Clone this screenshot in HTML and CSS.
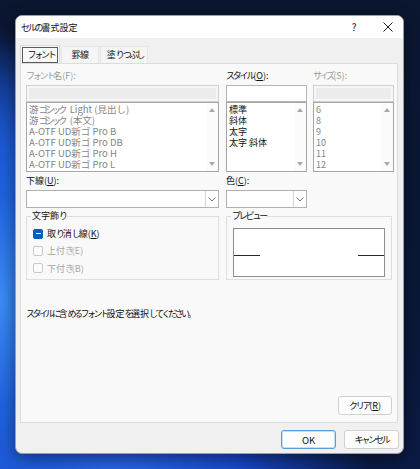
FILE: index.html
```html
<!DOCTYPE html>
<html lang="ja">
<head>
<meta charset="utf-8">
<title>セルの書式設定</title>
<link rel="stylesheet" href="styles.css">
</head>
<body>
<div class="desktop">
  <div class="dialog">
    <div class="titlebar">
      <span class="title"><span class="kn">セルの</span>書式設定</span>
      <span class="help">?</span>
      <span class="close">
        <svg width="10" height="10" viewBox="0 0 10 10"><path d="M0.5 0.5 L9.5 9.5 M9.5 0.5 L0.5 9.5" stroke="#1a1a1a" stroke-width="1" fill="none"/></svg>
      </span>
    </div>

    <div class="tabs">
      <div class="tab active"><span class="focus"><span class="kn">フォント</span></span></div>
      <div class="tab t2">罫線</div>
      <div class="tab t3">塗<span class="kn">りつぶし</span></div>
    </div>

    <div class="panel">
      <div class="top-grid">
        <div class="col">
          <div class="label dis"><span class="kn">フォント</span>名(F):</div>
          <div class="input dis"></div>
          <div class="list">
            <div class="items dis fontlist">
              <div>游<span class="kn">ゴシッ</span>ク Light (見出し)</div>
              <div>游<span class="kn">ゴシッ</span>ク (本文)</div>
              <div>A-OTF UD新ゴ Pro B</div>
              <div>A-OTF UD新ゴ Pro DB</div>
              <div>A-OTF UD新ゴ Pro H</div>
              <div>A-OTF UD新ゴ Pro L</div>
            </div>
            <div class="scroll"><span class="up"></span><span class="down"></span></div>
          </div>
          <div class="label">下線(<u>U</u>):</div>
          <div class="combo"><span class="field"></span><span class="drop"><svg width="8" height="5" viewBox="0 0 8 5"><path d="M0.5 0.5 L4 4 L7.5 0.5" stroke="#707070" fill="none"/></svg></span></div>
        </div>

        <div class="col">
          <div class="label"><span class="kn">スタイル</span>(<u>O</u>):</div>
          <div class="input"></div>
          <div class="list">
            <div class="items">
              <div>標準</div>
              <div>斜体</div>
              <div>太字</div>
              <div>太字 斜体</div>
            </div>
            <div class="scroll"><span class="up"></span><span class="down"></span></div>
          </div>
          <div class="label">色(<u>C</u>):</div>
          <div class="combo"><span class="field"></span><span class="drop"><svg width="8" height="5" viewBox="0 0 8 5"><path d="M0.5 0.5 L4 4 L7.5 0.5" stroke="#707070" fill="none"/></svg></span></div>
        </div>

        <div class="col">
          <div class="label dis"><span class="kn">サイズ</span>(S):</div>
          <div class="input dis"></div>
          <div class="list">
            <div class="items dis">
              <div>6</div>
              <div>8</div>
              <div>9</div>
              <div>10</div>
              <div>11</div>
              <div>12</div>
            </div>
            <div class="scroll"><span class="up"></span><span class="down"></span></div>
          </div>
        </div>
      </div>

      <div class="groups">
        <fieldset class="group effects">
          <legend>文字飾<span class="kn">り</span></legend>
          <div class="check"><span class="box on"></span><span>取<span class="kn">り</span>消<span class="kn">し</span>線(<u>K</u>)</span></div>
          <div class="check dis"><span class="box"></span><span>上付<span class="kn">き</span>(E)</span></div>
          <div class="check dis"><span class="box"></span><span>下付<span class="kn">き</span>(B)</span></div>
        </fieldset>
        <fieldset class="group preview">
          <legend><span class="kn">プレビュー</span></legend>
          <div class="pbox"><span class="pline"></span><span class="pline"></span></div>
        </fieldset>
      </div>

      <p class="hint"><span class="kn">スタイルに</span>含<span class="kn">めるフォント</span>設定<span class="kn">を</span>選択<span class="kn">してください</span>。</p>

      <div class="clear-row"><button class="btn clear"><span class="kn">クリア</span>(<u>R</u>)</button></div>
    </div>

    <div class="footer">
      <button class="btn ok">OK</button>
      <button class="btn"><span class="kn">キャンセル</span></button>
    </div>
  </div>
</div>
</body>
</html>
```

FILE: styles.css
```css
* { box-sizing: border-box; }

html, body {
  margin: 0;
  padding: 0;
}

body {
  width: 420px;
  height: 469px;
  overflow: hidden;
  font-family: "Noto Sans CJK JP", "Noto Sans", sans-serif;
  font-size: 9px;
  color: #0f0f0f;
}

/* narrow kana runs (the reference font has proportional kana) */
.kn { letter-spacing: -2.2px; }

.desktop {
  width: 420px;
  height: 469px;
  padding: 15px 0 0 15px;
  background:
    radial-gradient(ellipse 120px 260px at 0px 300px, #3d8cf5 0%, #1f63e0 40%, rgba(20,70,200,0.0) 100%),
    radial-gradient(ellipse 260px 120px at 110px 480px, #2a6ae6 0%, #1848c8 50%, rgba(20,60,180,0) 100%),
    radial-gradient(ellipse 200px 300px at -40px 320px, #1a55d8 0%, #1445c0 60%, rgba(15,40,140,0) 100%),
    linear-gradient(180deg, #0b1631 0%, #0a1836 60%, #0a1a44 100%);
}

.dialog {
  width: 389px;
  height: 439px;
  background: #f0f0f0;
  border: 1px solid #9aa0aa;
  border-radius: 7px;
  overflow: hidden;
  display: flex;
  flex-direction: column;
  box-shadow: 0 4px 16px rgba(0,0,0,0.45);
}

/* title bar */
.titlebar {
  height: 22px;
  flex: none;
  background: #ffffff;
  display: flex;
  align-items: center;
  padding-left: 5px;
}
.title {
  flex: 1;
  line-height: 14px;
  padding-top: 1px;
  white-space: nowrap;
}
.help {
  width: 12px;
  font-size: 10px;
  text-align: center;
  margin-right: 23px;
  line-height: 14px;
}
.close {
  width: 10px;
  height: 10px;
  margin-right: 10px;
  display: flex;
}

/* tabs */
.tabs {
  height: 25px;
  flex: none;
  display: flex;
  align-items: flex-end;
  padding-left: 4px;
}
.tab {
  height: 17px;
  line-height: 16px;
  text-align: center;
  background: #f5f5f5;
  border: 1px solid #e6e6e6;
  border-bottom: none;
  margin-right: 1px;
  white-space: nowrap;
}
.tab.active {
  width: 40px;
  height: 18px;
  background: #f9f9f9;
  border-color: #d9d9d9;
  padding: 1px 1px 0 1px;
}
.focus {
  display: block;
  height: 16px;
  border: 1px solid #5a5a5a;
  line-height: 14px;
  padding-left: 2px;
}
.tab.t2 { width: 38px; letter-spacing: -0.4px; }
.tab.t3 { width: 48px; padding-left: 2px; }

/* panel */
.panel {
  margin: 0 5px 0 4px;
  height: 360px;
  flex: none;
  background: #f9f9f9;
  border: 1px solid #dcdcdc;
  padding: 5px 4px 7px 5px;
  display: flex;
  flex-direction: column;
}

.top-grid {
  display: grid;
  grid-template-columns: 193px 81px 80px;
  column-gap: 7px;
}
.top-grid .col:last-child { margin-left: -1px; }

.label {
  height: 14px;
  line-height: 14px;
  white-space: nowrap;
}

u { text-decoration-thickness: 1px; text-underline-offset: 1px; }
.dis { color: #9a9a9a; }

.input {
  margin-top: 2px;
  height: 17px;
  border: 1px solid #b4b4b4;
  background: #ffffff;
}
.input.dis {
  background: #ececec;
  border-color: #cfcfcf;
  box-shadow: inset 0 0 0 2px #f6f6f6;
}

.list {
  height: 70px;
  border: 1px solid #a6a6a6;
  background: #ffffff;
  display: flex;
}
.items {
  flex: 1;
  padding: 1px 0 0 2px;
  line-height: 11.1px;
  font-size: 9px;
  white-space: nowrap;
  overflow: hidden;
}
.items.fontlist { font-size: 9.5px; }
.items.fontlist .kn { letter-spacing: -3px; }
.items.dis { color: #858585; }
.scroll {
  width: 12px;
  flex: none;
  background: #fbfbfb;
  display: flex;
  flex-direction: column;
  justify-content: space-between;
  align-items: center;
  padding: 5px 0 5px 0;
}
.up, .down {
  width: 0;
  height: 0;
  border-left: 3.5px solid transparent;
  border-right: 3.5px solid transparent;
}
.up { border-bottom: 4px solid #a8a8a8; }
.down { border-top: 4px solid #a8a8a8; }

.list + .label { margin-top: 2px; }

.combo {
  margin-top: 2px;
  height: 18px;
  border: 1px solid #b0b0b0;
  background: #ffffff;
  display: flex;
}
.combo .field { flex: 1; }
.combo .drop {
  width: 13px;
  border-left: 1px solid #d6d6d6;
  display: flex;
  align-items: center;
  justify-content: center;
}

/* group boxes */
.groups {
  margin-top: 1px;
  display: grid;
  grid-template-columns: 193px 166px;
  column-gap: 7px;
}
.group {
  margin: 0;
  border: 1px solid #dedede;
  padding: 0 6px 2px 6px;
  min-width: 0;
}
.group legend {
  padding: 0 1px;
  margin-left: -2px;
  line-height: 14px;
  height: 14px;
  white-space: nowrap;
}

.check {
  height: 17.3px;
  display: flex;
  align-items: center;
  white-space: nowrap;
}
.check:first-of-type { margin-top: 2px; }
.box {
  width: 10px;
  height: 10px;
  flex: none;
  border: 1px solid #c8c8c8;
  border-radius: 2px;
  background: #fbfbfb;
  margin-right: 4px;
  display: flex;
  align-items: center;
  justify-content: center;
}
.box.on {
  background: #005fb8;
  border-color: #005fb8;
}
.box.on::after {
  content: "";
  width: 5px;
  height: 1.5px;
  background: #ffffff;
}
.check.dis { color: #a6a6a6; }

.pbox {
  margin-top: 5px;
  height: 49px;
  border: 1px solid #8e8e8e;
  background: #ffffff;
  display: flex;
  justify-content: space-between;
  align-items: flex-start;
  padding-top: 26px;
}
.pline {
  width: 26px;
  border-top: 1px solid #2a2a2a;
}

.hint {
  margin: 27px 0 0 0;
  line-height: 14px;
  white-space: nowrap;
}
.hint .kn { letter-spacing: -2.5px; }

.clear-row {
  margin-top: auto;
  display: flex;
  justify-content: flex-end;
  padding-right: 1px;
}

.btn {
  font-family: "Noto Sans CJK JP", "Noto Sans", sans-serif;
  font-size: 9px;
  color: #0f0f0f;
  width: 55px;
  height: 19px;
  padding: 0;
  background: #fdfdfd;
  border: 1px solid #d0d0d0;
  border-radius: 3px;
  line-height: 16px;
  white-space: nowrap;
}
.btn.clear { width: 54px; }

.footer {
  flex: 1;
  display: flex;
  justify-content: flex-end;
  align-items: flex-start;
  padding: 7px 4px 0 0;
  gap: 8px;
}
.btn.ok {
  font-size: 9.5px;
  border: 1px solid #5b9bd9;
  box-shadow: inset 0 0 0 1px #c9def3;
}
```
